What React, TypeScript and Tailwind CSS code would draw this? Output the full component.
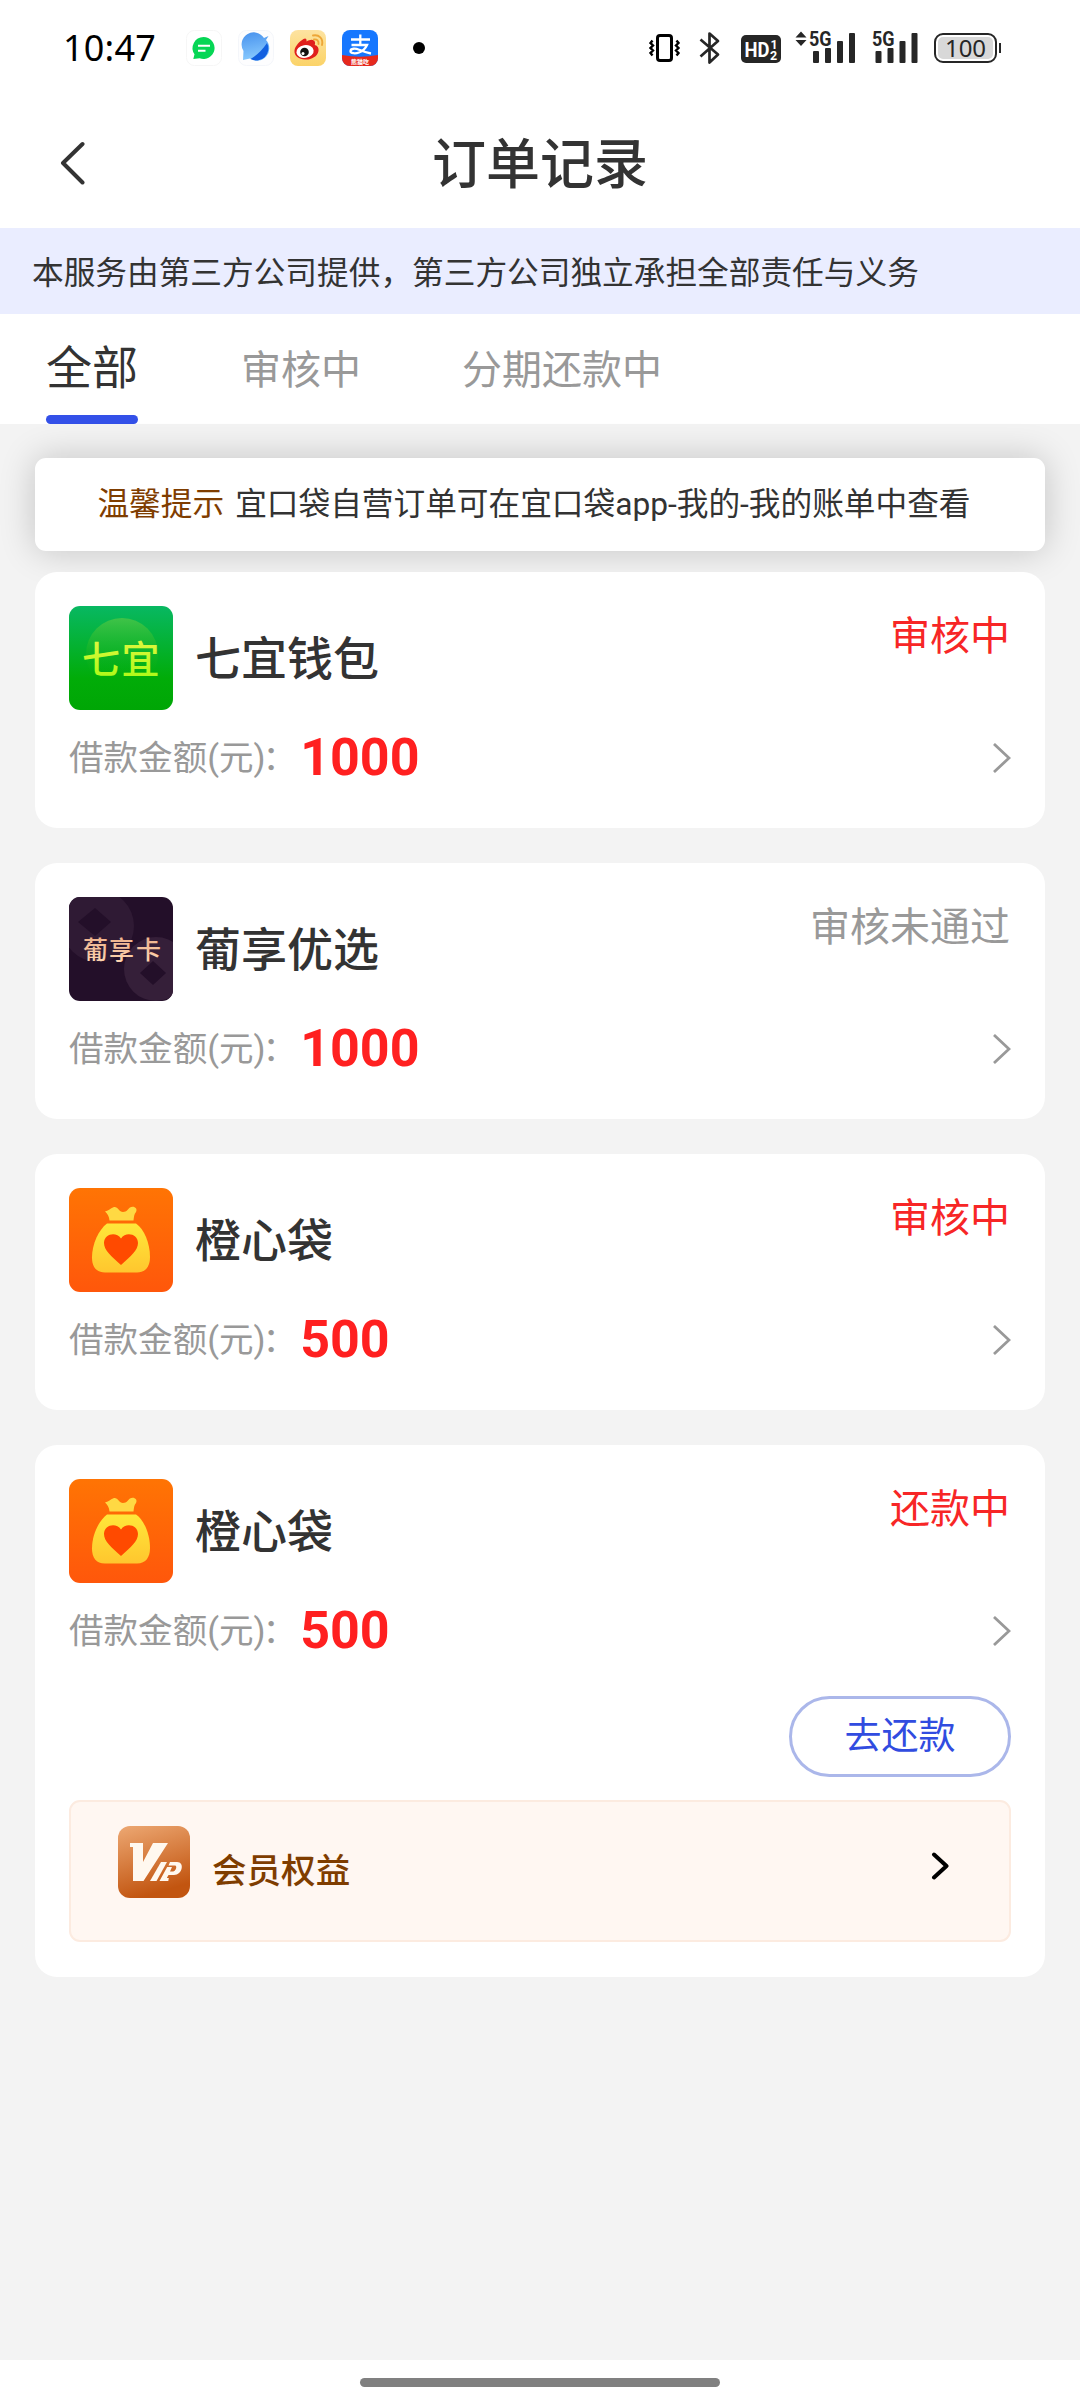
import React from 'react';

const CJK = "font-['Roboto','Noto_Sans_CJK_SC',sans-serif]";

function StatusBar() {
  return (
    <div className="flex h-24 shrink-0 items-center pl-[63px] pr-[79px]">
      <span className="w-[96px] whitespace-nowrap font-['Noto_Sans',sans-serif] text-[36px] leading-none tracking-[0.2px] text-black">10:47</span>
      <svg className="ml-[27px] h-9 w-9" viewBox="0 0 36 36">
        <rect x=".5" y=".5" width="35" height="35" rx="8" fill="#fff" stroke="#f6f6f6" />
        <path d="M17.500 7a11 11 0 1 1-3.800 21.300L7.300 29l1.200-4.800A11 11 0 0 1 17.500 7Z" fill="#06d655" />
        <path d="M12 15.700h12M12 20.700h7.500" stroke="#fff" strokeWidth="2" />
      </svg>
      <svg className="ml-4 h-9 w-9" viewBox="0 0 36 36">
        <defs>
          <linearGradient id="ball" x1="0.3" y1="0" x2="0.5" y2="1">
            <stop offset="0" stopColor="#4a94ee" />
            <stop offset="1" stopColor="#8ccdff" />
          </linearGradient>
        </defs>
        <rect x=".5" y=".5" width="35" height="35" rx="8" fill="#fdfdfe" stroke="#f4f6fa" />
        <path d="M28 10 30.500 6 26 8A12 12 0 0 0 5.500 21L5 30l7-1.500A12.300 12.300 0 0 0 28 10Z" fill="url(#ball)" />
        <path d="M29 13A12 12 0 0 1 12.500 29Q22 23.500 29 13Z" fill="#1260e0" />
      </svg>
      <svg className="ml-4 h-9 w-9" viewBox="0 0 36 36">
        <defs>
          <linearGradient id="wb" x1="0" y1="0" x2="0" y2="1">
            <stop offset="0" stopColor="#fde3a0" />
            <stop offset="1" stopColor="#fbd368" />
          </linearGradient>
        </defs>
        <rect width="36" height="36" rx="8" fill="url(#wb)" />
        <path d="M13.500 9c2-1.500 3.500 0 3 2.500 3-2 8-3 8.500 1 .2 1-.2 2-.2 2.500 3 .8 4.200 3 3.700 6-1 6-8 9-13.500 8.500C9 29 4 26 4.500 20.500 5 16 10 11 13.500 9Z" fill="#e01f1c" />
        <ellipse cx="15" cy="21.500" rx="8.700" ry="6.400" fill="#fff" transform="rotate(-9 15 21.500)" />
        <circle cx="14.500" cy="22" r="4.300" fill="#111" />
        <circle cx="13" cy="23.500" r="1.500" fill="#fff" />
        <path d="M24 9.500c3-.5 5 1.500 4.500 4.500M23 5.500c6-1.200 10.500 3 9 9.500" stroke="#eda637" strokeWidth="1.900" fill="none" strokeLinecap="round" />
      </svg>
      <svg className="ml-4 h-9 w-9" viewBox="0 0 36 36">
        <defs>
          <clipPath id="pay"><rect width="36" height="36" rx="8" /></clipPath>
        </defs>
        <g clipPath="url(#pay)">
          <rect width="36" height="36" fill="#1677ff" />
          <path d="M0 25q18 3.500 36 0v11H0Z" fill="#e6291d" />
        </g>
        <path d="M9 9.500h19M18.300 4.500v10.500M9.500 15h15.500q-2.500 5.500-8 7.500c-3.500 1.300-8.500 1-8.500-1.300 0-3 5-3 8.500-1.500 4 1.700 7 3 12 3.800" stroke="#fff" strokeWidth="2.300" fill="none" />
        <text x="18" y="33.500" textAnchor="middle" fontSize="6" fontWeight="700" fill="#fff" fontFamily="Noto Sans CJK SC">熊猫吃</text>
      </svg>
      <span className="ml-[35px] size-3 rounded-full bg-black" />
      <div className="ml-auto flex items-center">
        <svg className="h-8 w-8" viewBox="0 0 32 32" fill="none" stroke="#000">
          <rect x="8.500" y="3.500" width="14" height="25" rx="2.500" strokeWidth="3" />
          <path d="M3.500 8.500 1.500 11l2.500 2.500-2.500 2.500 2.500 2.500-2.500 2.500 2 2.500M27.500 8.500l2 2.500-2.500 2.500 2.500 2.500-2.500 2.500 2.500 2.500-2 2.500" strokeWidth="2.400" />
        </svg>
        <svg className="ml-[17px] h-9 w-6" viewBox="0 0 24 36" fill="none" stroke="#262626" strokeWidth="2.700" strokeLinejoin="round">
          <path d="M2.500 9.500 20 24.500 11.500 32.500V3.500L20 11 2.500 26.500" />
        </svg>
        <svg className="ml-[19px] mt-[2px] h-7 w-10" viewBox="0 0 40 28">
          <rect width="40" height="28" rx="5" fill="#262626" />
          <text x="3.500" y="21.500" fontSize="20.500" fontWeight="700" fill="#fff" fontFamily="Roboto" textLength="25" lengthAdjust="spacingAndGlyphs">HD</text>
          <text x="29.500" y="13.500" fontSize="12.500" fontWeight="700" fill="#fff" fontFamily="Roboto">1</text>
          <text x="29" y="25" fontSize="12.500" fontWeight="700" fill="#fff" fontFamily="Roboto">2</text>
        </svg>
        <svg className="ml-3.5 h-11 w-[60px]" viewBox="0 -5 60 44" fill="#262626">
          <path d="M6 0.500l5.500 6H.5ZM6 15 .5 9h11Z" />
          <text x="14" y="15" fontSize="20" fontWeight="700" fontFamily="Roboto" textLength="22.500" lengthAdjust="spacingAndGlyphs">5G</text>
          <rect x="18" y="20" width="6" height="12" rx="1" />
          <rect x="30" y="17" width="6" height="15" rx="1" />
          <rect x="42" y="10" width="6" height="22" rx="1" />
          <rect x="54" y="2" width="6" height="30" rx="1" />
        </svg>
        <svg className="ml-[17px] h-11 w-[46px]" viewBox="0 -5 46 44" fill="#262626">
          <text x="0" y="15" fontSize="20" fontWeight="700" fontFamily="Roboto" textLength="22.500" lengthAdjust="spacingAndGlyphs">5G</text>
          <rect x="3.500" y="20" width="6" height="12" rx="1" />
          <rect x="15.500" y="17" width="6" height="15" rx="1" />
          <rect x="27.500" y="10" width="6" height="22" rx="1" />
          <rect x="39.500" y="2" width="6" height="30" rx="1" />
        </svg>
        <div className="ml-4 flex items-center">
          <div className="flex h-[30px] w-[63px] items-center justify-center rounded-[9px] border-2 border-[#262626] p-[2px]">
            <div className="flex h-full w-full items-center justify-center rounded-[5px] bg-[#d8d8d8] font-['Noto_Sans',sans-serif] text-[24px] leading-none text-[#262626]">100</div>
          </div>
          <span className="ml-0.5 h-2.5 w-[2px] bg-[#262626]" />
        </div>
      </div>
    </div>
  );
}

function QiyiLogo() {
  return (
    <svg className="size-[104px] rounded-[11px]" viewBox="0 0 104 104">
      <defs>
        <linearGradient id="qbg" x1="0" y1="0" x2="0" y2="1">
          <stop offset="0" stopColor="#08b862" />
          <stop offset=".7" stopColor="#01ac08" />
          <stop offset="1" stopColor="#00a605" />
        </linearGradient>
        <linearGradient id="qc" x1="0" y1="0" x2="0" y2="1">
          <stop offset="0" stopColor="#40c348" />
          <stop offset=".8" stopColor="#0bb00c" stopOpacity="0" />
        </linearGradient>
        <linearGradient id="qt" x1="0" y1="0" x2="0" y2="1">
          <stop offset="0" stopColor="#eef64a" />
          <stop offset="1" stopColor="#a5fa10" />
        </linearGradient>
      </defs>
      <rect width="104" height="104" fill="url(#qbg)" />
      <circle cx="53" cy="48" r="36" fill="url(#qc)" />
      <text x="13 52.500" y="67" fontSize="38" fontWeight="500" fill="url(#qt)" fontFamily="Noto Sans CJK SC">七宜</text>
    </svg>
  );
}

function PuxiangLogo() {
  return (
    <svg className="size-[104px] rounded-[11px]" viewBox="0 0 104 104">
      <defs>
        <linearGradient id="pt" x1="0" y1="0" x2="0" y2="1">
          <stop offset="0" stopColor="#e9a883" />
          <stop offset="1" stopColor="#ffd9b4" />
        </linearGradient>
      </defs>
      <rect width="104" height="104" fill="#230f29" />
      <circle cx="29" cy="29" r="36" fill="#2f1a34" />
      <path d="m26 11 16 14-16 14L9 25Z" fill="#230f29" />
      <circle cx="87" cy="72" r="32" fill="#351f39" />
      <path d="m84 64 13 12-13 12-13-12Z" fill="#230f29" />
      <text x="14 40 67" y="61.500" fontSize="25" fontWeight="500" fill="url(#pt)" fontFamily="Noto Sans CJK SC">葡享卡</text>
    </svg>
  );
}

function BagLogo() {
  return (
    <svg className="size-[104px] rounded-[11px]" viewBox="0 0 104 104">
      <defs>
        <linearGradient id="bbg" x1="0" y1="0" x2="0" y2="1">
          <stop offset="0" stopColor="#ff7404" />
          <stop offset="1" stopColor="#ff570b" />
        </linearGradient>
        <linearGradient id="bag" x1="0" y1="0" x2="0" y2="1">
          <stop offset="0" stopColor="#ffe83a" />
          <stop offset="1" stopColor="#ffc62e" />
        </linearGradient>
      </defs>
      <rect width="104" height="104" fill="url(#bbg)" />
      <path d="M36 23.500c3-.500 5-3 9-4.500 4-.500 5 5 9 5s5-3 7-4.500c4-2 8 1 6 4.500-2 2-2 5-2.500 8.500H40.500C40 28 38.500 26 36 23.500Z" fill="#ffd943" />
      <path d="M38 35.500h29C75 41 81 55 81 69c0 9-4 15.500-13 15.500H36c-9 0-13-6-13-15 0-14 7-28 15-34Z" fill="url(#bag)" />
      <path d="M52 77C42 68 35 62 35 55c0-9 12-12 17-4.500C57 43 69 46 69 55c0 7-7 13-17 22Z" fill="#ff4a00" />
    </svg>
  );
}

function VipIcon() {
  return (
    <svg className="size-[72px] rounded-xl" viewBox="0 0 72 72">
      <defs>
        <linearGradient id="vbg" x1="0" y1="0" x2=".3" y2="1">
          <stop offset="0" stopColor="#eda873" />
          <stop offset="1" stopColor="#c25510" />
        </linearGradient>
      </defs>
      <rect width="72" height="72" fill="url(#vbg)" />
      <path d="M12 17h13v19l10-19h15L25.500 55H15V21h-3Z" fill="#fff8ef" />
      <path d="M43 36h6L38.500 55h-6.500Z" fill="#fff8ef" />
      <path fillRule="evenodd" d="M52 36h7c8 0 5.500 13-3 13h-5.500l-1.700 3h2l-.5 3H41.500l7.700-14H54l-2 4.500h3c3 0 4.500-6 2-6h-6.500Z" fill="#fff8ef" />
    </svg>
  );
}

type Order = { logo: React.ReactNode; name: string; amount: string; status: string; muted?: boolean; extra?: boolean };

function OrderCard({ logo, name, amount, status, muted, extra }: Order) {
  return (
    <section className={`flex flex-col rounded-[22px] bg-white px-[34px] pt-[34px] ${extra ? 'h-[532px]' : 'h-64'}`}>
      <div className="flex h-[104px]">
        {logo}
        <h2 className="ml-[22px] mt-[2px] flex items-center text-[46px] font-medium leading-none text-[#333]">{name}</h2>
        <span className={`ml-auto mr-[1px] mt-[11px] text-[40px] leading-[40px] ${muted ? 'text-[#999]' : 'text-[#f72626]'}`}>{status}</span>
      </div>
      <div className="mt-[19px] flex h-[58px] items-center">
        <span className="text-[34.56px] leading-none text-[#999]">借款金额(元)</span>
        <span className="-ml-[3px] mr-[3px] text-[34.56px] leading-none text-[#999]">：</span>
        <span className="text-[52px] font-bold leading-none text-[#ff2020]">{amount}</span>
        <svg className="ml-auto h-[30px] w-[18px]" viewBox="0 0 18 30" fill="none" stroke="#999" strokeWidth="2.800">
          <path d="M1 1 16 15 1 29" />
        </svg>
      </div>
      {extra && (
        <>
          <button className="mt-[36px] h-[81px] w-[222px] self-end rounded-full border-[3px] border-[#abb7ea] text-[37px] leading-none text-[#314ce0]">去还款</button>
          <div className="mt-[23px] flex h-[142px] items-start rounded-[11px] border-2 border-[#fcebe0] bg-[#fff7f2] pl-[47px] pr-[60px] pt-6">
            <VipIcon />
            <span className="ml-[22px] mt-[27px] text-[34.56px] font-medium leading-[36px] text-[#7f3d00]">会员权益</span>
            <svg className="ml-auto mt-[25px] h-[30px] w-[18px]" viewBox="0 0 18 30" fill="none" stroke="#000" strokeWidth="4" strokeLinecap="round" strokeLinejoin="round">
              <path d="m3 3.500 12.500 11.500L3 26.500" />
            </svg>
          </div>
        </>
      )}
    </section>
  );
}

const orders: Order[] = [
  { logo: <QiyiLogo />, name: '七宜钱包', amount: '1000', status: '审核中' },
  { logo: <PuxiangLogo />, name: '葡享优选', amount: '1000', status: '审核未通过', muted: true },
  { logo: <BagLogo />, name: '橙心袋', amount: '500', status: '审核中' },
  { logo: <BagLogo />, name: '橙心袋', amount: '500', status: '还款中', extra: true },
];

export default function App() {
  return (
    <div lang="zh-CN" className={`flex h-[2408px] w-[1080px] flex-col overflow-hidden bg-[#f3f3f3] ${CJK}`}>
      <div className="bg-white">
        <StatusBar />
        <header className="grid h-[132px] grid-cols-[1fr_auto_1fr] items-center">
          <svg className="ml-[59px] mt-[2px] h-[44px] w-[28px]" viewBox="0 0 28 44" fill="none" stroke="#333" strokeWidth="4" strokeLinecap="round" strokeLinejoin="round">
            <path d="M23.500 3 4 22l19.500 19.500" />
          </svg>
          <h1 className="mt-[8px] text-[54px] font-medium leading-none text-[#333]">订单记录</h1>
        </header>
      </div>
      <p className="flex h-[86px] shrink-0 items-center whitespace-nowrap bg-[#eaedff] pl-8 pt-[5px] text-[31.68px] text-[#333]">
        本服务由第三方公司提供，第三方公司独立承担全部责任与义务
      </p>
      <nav className="flex h-[110px] shrink-0 bg-white pl-[46px]">
        <div className="flex w-[92px] flex-col items-center">
          <span className="mt-[30px] text-[46px] leading-[48px] text-[#333]">全部</span>
          <span className="mt-[23px] h-[9px] w-full rounded-full bg-[#3350e8]" />
        </div>
        <span className="ml-[103px] mt-[37px] text-[40px] leading-[40px] text-[#999]">审核中</span>
        <span className="ml-[101px] mt-[37px] text-[40px] leading-[40px] text-[#999]">分期还款中</span>
      </nav>
      <main className="flex grow flex-col px-[35px] pt-[34px]">
        <div className="flex h-[93px] items-center justify-center whitespace-nowrap rounded-[11px] bg-white pr-3 text-[31.68px] leading-none shadow-[0_0_36px_rgba(0,0,0,0.2)]">
          <span className="mr-[11px] text-[#7f3d00]">温馨提示</span>
          <span className="text-[#333]">宜口袋自营订单可在宜口袋app-我的-我的账单中查看</span>
        </div>
        <div className="relative mt-[21px] flex flex-col gap-[35px]">
          {orders.map((o, i) => (
            <OrderCard key={i} {...o} />
          ))}
        </div>
      </main>
      <div className="flex h-12 shrink-0 justify-center bg-white pt-[18px]">
        <span className="h-[9px] w-[360px] rounded-full bg-[#808080]" />
      </div>
    </div>
  );
}
